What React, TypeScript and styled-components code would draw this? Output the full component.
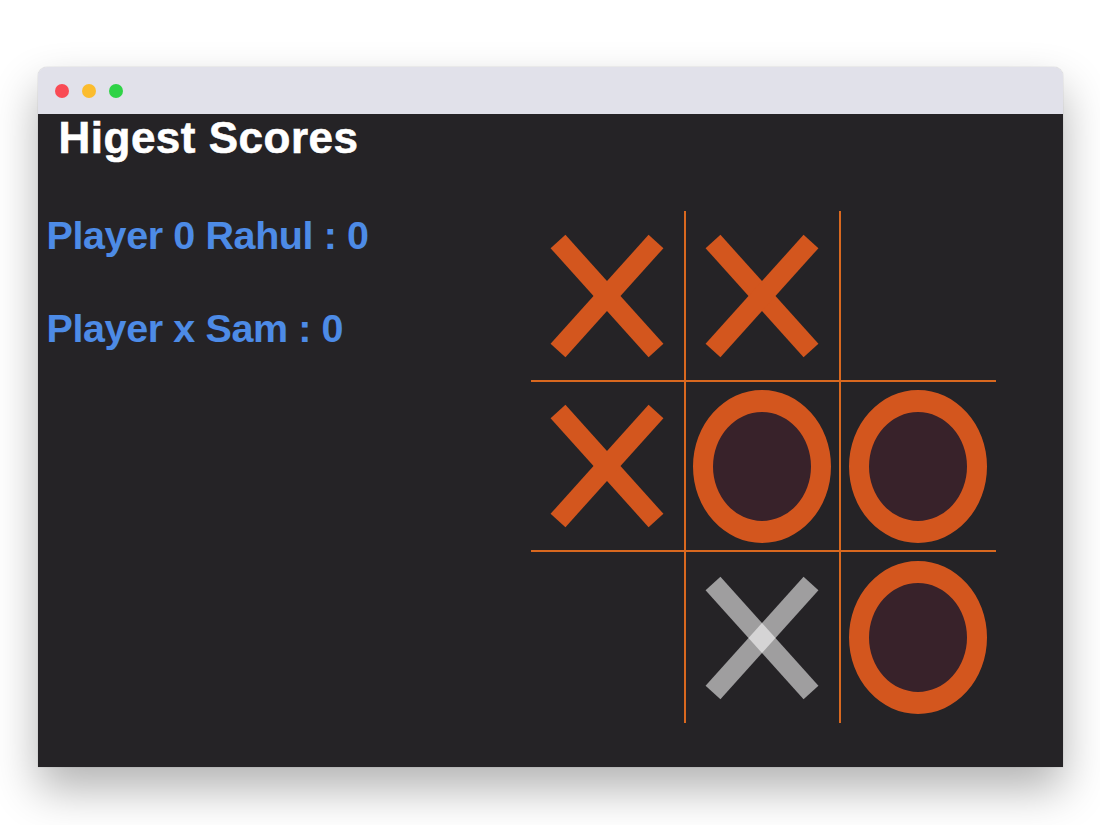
import styled, { createGlobalStyle } from "styled-components";

type Mark = "x" | "o" | "ghost" | null;

const board: Mark[] = ["x", "x", null, "x", "o", "o", null, "ghost", "o"];

const scores = [
  { mark: "0", name: "Rahul", points: 0 },
  { mark: "x", name: "Sam", points: 0 },
];

const GlobalStyle = createGlobalStyle`
  html, body {
    margin: 0;
    padding: 0;
    background: #ffffff;
  }
  body {
    font-family: "Liberation Sans", Arial, sans-serif;
  }
`;

const Page = styled.div`
  display: flex;
  justify-content: center;
  padding-top: 67px;
  height: 825px;
  box-sizing: border-box;
`;

const Window = styled.div`
  width: 1025px;
  height: 700px;
  display: flex;
  flex-direction: column;
  border-radius: 9px 9px 0 0;
  overflow: hidden;
  box-shadow: 0 22px 45px rgba(0, 0, 0, 0.3), 0 0 1px rgba(0, 0, 0, 0.4);
`;

const TitleBar = styled.div`
  height: 47px;
  flex-shrink: 0;
  background: #e1e1ea;
  display: flex;
  align-items: center;
  gap: 13px;
  padding-left: 17px;
`;

const Light = styled.span<{ $color: string }>`
  width: 14px;
  height: 14px;
  border-radius: 50%;
  background: ${(p) => p.$color};
`;

const Content = styled.div`
  flex: 1;
  background: #252326;
  display: flex;
  flex-direction: column;
`;

const Heading = styled.h1`
  margin: 2px 0 0 21px;
  font-size: 44px;
  line-height: 1;
  font-weight: 700;
  color: #ffffff;
  -webkit-text-stroke: 0.6px #ffffff;
  letter-spacing: 0.5px;
`;

const Main = styled.div`
  display: flex;
  align-items: flex-start;
  padding-right: 67px;
  margin-top: 51px;
`;

const ScoreList = styled.div`
  display: flex;
  flex-direction: column;
  gap: 53px;
  padding: 5px 0 0 9px;
`;

const ScoreLine = styled.div`
  font-size: 39.5px;
  line-height: 1;
  font-weight: 700;
  color: #4d8be6;
  letter-spacing: -0.4px;
`;

const Board = styled.div`
  margin-left: auto;
  display: grid;
  grid-template-columns: repeat(3, 155px);
  grid-template-rows: 171px 170px 171px;
`;

const Cell = styled.div<{ $right: boolean; $bottom: boolean }>`
  display: flex;
  align-items: center;
  justify-content: center;
  box-sizing: border-box;
  border-right: ${(p) => (p.$right ? "2px solid #d9681f" : "none")};
  border-bottom: ${(p) => (p.$bottom ? "2px solid #d9681f" : "none")};
`;

const Ring = styled.div`
  width: 138px;
  height: 153px;
  box-sizing: border-box;
  border-radius: 50%;
  border-style: solid;
  border-color: #d3561e;
  border-width: 22px 20px;
  background: #38222a;
`;

const Cross = ({ ghost }: { ghost?: boolean }) => {
  const stroke = ghost ? "#ffffff" : "#d3561e";
  const opacity = ghost ? 0.56 : 1;
  return (
    <svg width="112" height="124" viewBox="0 0 112 124" overflow="visible">
      <line x1="7" y1="7.5" x2="105" y2="116.5" stroke={stroke} strokeOpacity={opacity} strokeWidth="20" />
      <line x1="105" y1="7.5" x2="7" y2="116.5" stroke={stroke} strokeOpacity={opacity} strokeWidth="20" />
    </svg>
  );
};

const renderMark = (mark: Mark) => {
  if (mark === "x") return <Cross />;
  if (mark === "ghost") return <Cross ghost />;
  if (mark === "o") return <Ring />;
  return null;
};

export default function App() {
  return (
    <>
      <GlobalStyle />
      <Page>
        <Window>
          <TitleBar>
            <Light $color="#f94b55" />
            <Light $color="#fbbc2e" />
            <Light $color="#2fd347" />
          </TitleBar>
          <Content>
            <Heading>Higest Scores</Heading>
            <Main>
              <ScoreList>
                {scores.map((s) => (
                  <ScoreLine key={s.name}>
                    Player {s.mark} {s.name} : {s.points}
                  </ScoreLine>
                ))}
              </ScoreList>
              <Board>
                {board.map((mark, i) => (
                  <Cell key={i} $right={i % 3 < 2} $bottom={i < 6}>
                    {renderMark(mark)}
                  </Cell>
                ))}
              </Board>
            </Main>
          </Content>
        </Window>
      </Page>
    </>
  );
}
